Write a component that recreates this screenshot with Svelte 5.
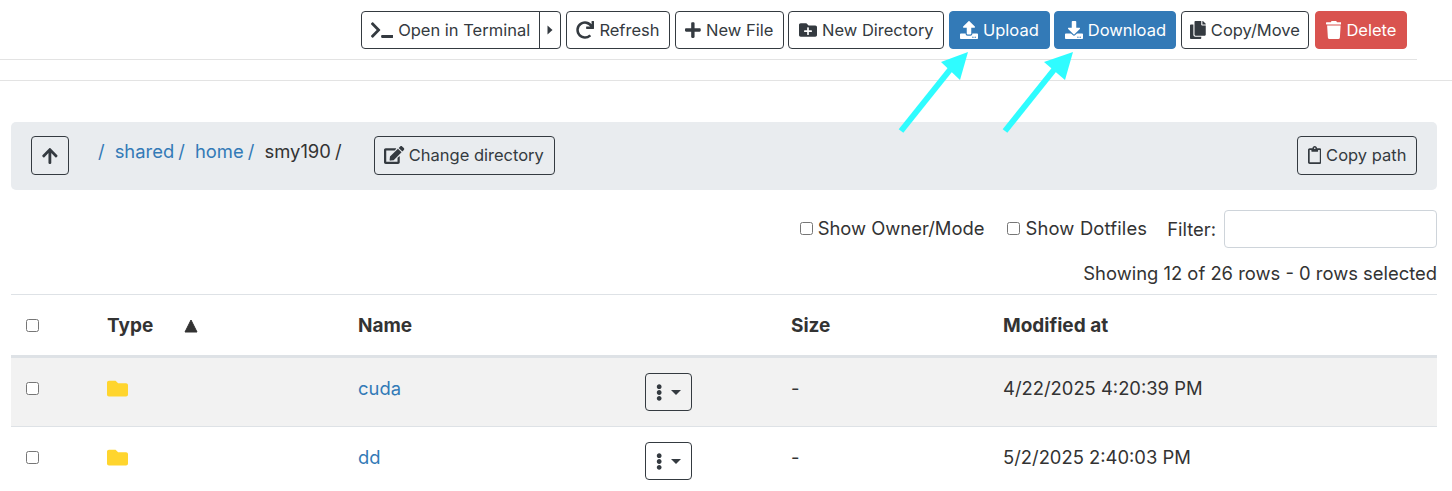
<script>
  const I = {
    terminal: [640, "M257.981 272.971L63.638 467.314c-9.373 9.373-24.569 9.373-33.941 0L7.029 444.647c-9.357-9.357-9.375-24.522-.04-33.901L161.011 256 6.99 101.255c-9.335-9.379-9.317-24.544.04-33.901l22.667-22.667c9.373-9.373 24.569-9.373 33.941 0L257.981 239.03c9.373 9.372 9.373 24.568 0 33.941zM640 456v-32c0-13.255-10.745-24-24-24H312c-13.255 0-24 10.745-24 24v32c0 13.255 10.745 24 24 24h304c13.255 0 24-10.745 24-24z"],
    redo: [512, "M500.33 0h-47.41a12 12 0 0 0-12 12.57l4 82.76A247.42 247.42 0 0 0 256 8C119.34 8 7.9 119.53 8 256.19 8.1 393.07 119.1 504 256 504a247.1 247.1 0 0 0 166.18-63.91 12 12 0 0 0 .48-17.43l-34-34a12 12 0 0 0-16.38-.55A176 176 0 1 1 402.1 157.8l-101.53-4.87a12 12 0 0 0-12.57 12v47.41a12 12 0 0 0 12 12h200.33a12 12 0 0 0 12-12V12a12 12 0 0 0-12-12z"],
    plus: [448, "M416 208H272V64c0-17.67-14.33-32-32-32h-32c-17.67 0-32 14.33-32 32v144H32c-17.67 0-32 14.33-32 32v32c0 17.67 14.33 32 32 32h144v144c0 17.67 14.33 32 32 32h32c17.67 0 32-14.33 32-32V304h144c17.67 0 32-14.33 32-32v-32c0-17.67-14.33-32-32-32z"],
    folderPlus: [512, "M464 128H272l-54.63-54.63c-6-6-14.14-9.37-22.63-9.37H48C21.49 64 0 85.49 0 112v288c0 26.51 21.49 48 48 48h416c26.51 0 48-21.49 48-48V176c0-26.51-21.49-48-48-48zm-96 168c0 8.84-7.16 16-16 16h-72v72c0 8.84-7.16 16-16 16h-16c-8.84 0-16-7.16-16-16v-72h-72c-8.84 0-16-7.16-16-16v-16c0-8.84 7.16-16 16-16h72v-72c0-8.84 7.16-16 16-16h16c8.84 0 16 7.16 16 16v72h72c8.84 0 16 7.16 16 16v16z"],
    upload: [512, "M296 384h-80c-13.3 0-24-10.7-24-24V192h-87.7c-17.8 0-26.7-21.5-14.1-34.1L242.3 5.7c7.5-7.5 19.8-7.5 27.3 0l152.2 152.2c12.6 12.6 3.7 34.1-14.1 34.1H320v168c0 13.3-10.7 24-24 24zm216-8v112c0 13.3-10.7 24-24 24H24c-13.3 0-24-10.7-24-24V376c0-13.3 10.7-24 24-24h136v8c0 30.9 25.1 56 56 56h80c30.9 0 56-25.1 56-56v-8h136c13.3 0 24 10.7 24 24zm-124 88c0-11-9-20-20-20s-20 9-20 20 9 20 20 20 20-9 20-20zm64 0c0-11-9-20-20-20s-20 9-20 20 9 20 20 20 20-9 20-20z"],
    download: [512, "M216 0h80c13.3 0 24 10.7 24 24v168h87.7c17.8 0 26.7 21.5 14.1 34.1L269.7 378.3c-7.5 7.5-19.8 7.5-27.3 0L90.1 226.1c-12.6-12.6-3.7-34.1 14.1-34.1H192V24c0-13.3 10.7-24 24-24zm296 376v112c0 13.3-10.7 24-24 24H24c-13.3 0-24-10.7-24-24V376c0-13.3 10.7-24 24-24h146.7l49 49c20.1 20.1 52.5 20.1 72.6 0l49-49H488c13.3 0 24 10.7 24 24zm-124 88c0-11-9-20-20-20s-20 9-20 20 9 20 20 20 20-9 20-20zm64 0c0-11-9-20-20-20s-20 9-20 20 9 20 20 20 20-9 20-20z"],
    copy: [448, "M320 448v40c0 13.255-10.745 24-24 24H24c-13.255 0-24-10.745-24-24V120c0-13.255 10.745-24 24-24h72v296c0 30.879 25.121 56 56 56h168zm0-344V0H152c-13.255 0-24 10.745-24 24v368c0 13.255 10.745 24 24 24h272c13.255 0 24-10.745 24-24V128H344c-13.2 0-24-10.8-24-24zm120.971-31.029L375.029 7.029A24 24 0 0 0 358.059 0H352v96h96v-6.059a24 24 0 0 0-7.029-16.97z"],
    trash: [448, "M432 32H312l-9.4-18.7A24 24 0 0 0 281.1 0H166.8a23.72 23.72 0 0 0-21.4 13.3L136 32H16A16 16 0 0 0 0 48v32a16 16 0 0 0 16 16h416a16 16 0 0 0 16-16V48a16 16 0 0 0-16-16zM53.2 467a48 48 0 0 0 47.9 45h245.8a48 48 0 0 0 47.9-45L416 128H32z"],
    up: [448, "M34.9 289.5l-22.2-22.2c-9.4-9.4-9.4-24.6 0-33.9L207 39c9.4-9.4 24.6-9.4 33.9 0l194.3 194.3c9.4 9.4 9.4 24.6 0 33.9L413 289.4c-9.5 9.5-25 9.3-34.3-.4L264 168.6V456c0 13.3-10.7 24-24 24h-32c-13.3 0-24-10.7-24-24V168.6L69.2 289.1c-9.3 9.8-24.8 10-34.3.4z"],
    edit: [576, "M402.6 83.2l90.2 90.2c3.8 3.8 3.8 10 0 13.8L274.4 405.6l-92.8 10.3c-12.4 1.4-22.9-9.1-21.5-21.5l10.3-92.8L388.8 83.2c3.8-3.8 10-3.8 13.8 0zm162-22.9l-48.8-48.8c-15.2-15.2-39.9-15.2-55.2 0l-35.4 35.4c-3.8 3.8-3.8 10 0 13.8l90.2 90.2c3.8 3.8 10 3.8 13.8 0l35.4-35.4c15.2-15.3 15.2-40 0-55.2zM384 346.2V448H64V128h229.8c3.2 0 6.2-1.3 8.5-3.5l40-40c7.6-7.6 2.2-20.5-8.5-20.5H48C21.5 64 0 85.5 0 112v352c0 26.5 21.5 48 48 48h352c26.5 0 48-21.5 48-48V306.2c0-10.7-12.9-16-20.5-8.5l-40 40c-2.2 2.3-3.5 5.3-3.5 8.5z"],
    clip: [384, "M336 64h-80c0-35.3-28.7-64-64-64s-64 28.7-64 64H48C21.5 64 0 85.5 0 112v352c0 26.5 21.5 48 48 48h288c26.5 0 48-21.5 48-48V112c0-26.5-21.5-48-48-48zM192 40c13.3 0 24 10.7 24 24s-10.7 24-24 24-24-10.7-24-24 10.7-24 24-24zm144 418c0 3.3-2.7 6-6 6H54c-3.3 0-6-2.7-6-6V118c0-3.3 2.7-6 6-6h42v36c0 6.6 5.4 12 12 12h168c6.6 0 12-5.4 12-12v-36h42c3.3 0 6 2.7 6 6z"],
    folder: [512, "M464 128H272l-64-64H48C21.49 64 0 85.49 0 112v288c0 26.51 21.49 48 48 48h416c26.51 0 48-21.49 48-48V176c0-26.51-21.49-48-48-48z"],
    dots: [192, "M96 184c39.8 0 72 32.2 72 72s-32.2 72-72 72-72-32.2-72-72 32.2-72 72-72zM24 80c0 39.8 32.2 72 72 72s72-32.2 72-72S135.8 8 96 8 24 40.2 24 80zm0 352c0 39.8 32.2 72 72 72s72-32.2 72-72-32.2-72-72-72-72 32.2-72 72z"]
  };
  const tools = [
    { key: 'redo', label: 'Refresh', w: 'w105' },
    { key: 'plus', label: 'New File', w: 'w109' },
    { key: 'folderPlus', label: 'New Directory', w: 'w156' },
    { key: 'upload', label: 'Upload', w: 'w101', kind: 'primary' },
    { key: 'download', label: 'Download', w: 'w122', kind: 'primary' },
    { key: 'copy', label: 'Copy/Move', w: 'w128' },
    { key: 'trash', label: 'Delete', w: 'w92', kind: 'danger' }
  ];
  const rows = [
    { name: 'cuda', date: '4/22/2025 4:20:39 PM', alt: true },
    { name: 'dd', date: '5/2/2025 2:40:03 PM', alt: false }
  ];
</script>

{#snippet icon(key)}
  <svg class="ico" viewBox="0 0 {I[key][0]} 512" aria-hidden="true"><path d={I[key][1]} /></svg>
{/snippet}

<div class="page">
  <div class="toolbar">
    <div class="split">
      <button class="btn term">{@render icon('terminal')}<span>Open in Terminal</span></button>
      <button class="btn caret" aria-label="More"><svg viewBox="0 0 6 10" class="tri"><path d="M0.5 0.5 L5.5 5 L0.5 9.5 Z" /></svg></button>
    </div>
    {#each tools as t}
      <button class="btn {t.w} {t.kind ?? ''}">{@render icon(t.key)}<span>{t.label}</span></button>
    {/each}
  </div>
  <div class="rule short"></div>
  <div class="rule long"></div>

  <div class="crumbbar">
    <button class="btn upbtn" aria-label="Up">{@render icon('up')}</button>
    <div class="crumbs">
      <a href="#root">/</a>
      <a href="#shared">shared /</a>
      <a href="#home">home /</a>
      <span>smy190 /</span>
    </div>
    <button class="btn chdir">{@render icon('edit')}<span>Change directory</span></button>
    <button class="btn cpath">{@render icon('clip')}<span>Copy path</span></button>
  </div>

  <div class="filters">
    <label class="chk first"><input type="checkbox" />Show Owner/Mode</label>
    <label class="chk second"><input type="checkbox" />Show Dotfiles</label>
    <label class="flt" for="flt">Filter:</label>
    <input id="flt" class="fltin" type="text" />
  </div>
  <div class="count">Showing 12 of 26 rows - 0 rows selected</div>

  <div class="table">
    <div class="row thead">
      <div class="c"><input type="checkbox" /></div>
      <div class="c type">Type <svg class="sort" viewBox="0 0 14 14"><path d="M7 1 L13 13 H1 Z" stroke-linejoin="round" /></svg></div>
      <div class="c">Name</div>
      <div class="c"></div>
      <div class="c">Size</div>
      <div class="c">Modified at</div>
    </div>
    {#each rows as r}
      <div class="row body" class:alt={r.alt}>
        <div class="c box"><input type="checkbox" /></div>
        <div class="c folder up">{@render icon('folder')}</div>
        <div class="c up"><a href="#{r.name}">{r.name}</a></div>
        <div class="c">
          <button class="btn kebab" aria-label="Actions">{@render icon('dots')}<svg class="dd" viewBox="0 0 10 5"><path d="M0 0 H10 L5 5 Z" /></svg></button>
        </div>
        <div class="c up">-</div>
        <div class="c up">{r.date}</div>
      </div>
    {/each}
  </div>

  <svg class="arrows" viewBox="0 0 1452 491" aria-hidden="true">
    <path class="shaft" d="M901 131 L953 66" />
    <path class="tip" d="M968 52 L960 80 L941 62 Z" />
    <path class="shaft" d="M1005 131 L1057 66" />
    <path class="tip" d="M1073 52 L1065 80 L1044 62 Z" />
  </svg>
</div>

<style>
  :global(body) { margin: 0; background: #fff; }
  .page {
    position: relative;
    height: 491px;
    overflow: hidden;
    font-family: Inter, "Liberation Sans", sans-serif;
    font-size: 18.4px;
    line-height: 26px;
    color: #333;
  }
  a { color: #337ab7; text-decoration: none; }
  .toolbar {
    display: flex;
    justify-content: flex-end;
    gap: 4.57px;
    padding: 11px 45px 0 0;
  }
  .btn {
    display: inline-flex;
    align-items: center;
    justify-content: center;
    gap: 5px;
    height: 38px;
    padding: 0;
    box-sizing: border-box;
    font: inherit;
    font-size: 16.5px;
    color: #343a40;
    background: transparent;
    border: 1px solid #343a40;
    border-radius: 4px;
    white-space: nowrap;
  }
  .ico { height: 18px; width: auto; fill: currentColor; flex: none; }
  .split { display: flex; width: 200.5px; }
  .term { flex: 1; border-radius: 4px 0 0 4px; }
  .caret { width: 22px; margin-left: -1px; border-radius: 0 4px 4px 0; flex: none; }
  .tri { width: 6px; height: 10px; fill: #343a40; }
  .w105 { width: 104.5px; }
  .w109 { width: 109px; }
  .w156 { width: 156px; }
  .w101 { width: 101px; }
  .w122 { width: 122px; }
  .w128 { width: 128px; }
  .w92 { width: 92px; }
  .primary { background: #337ab7; border-color: #337ab7; color: #fff; }
  .danger { background: #d9534f; border-color: #d9534f; color: #fff; margin-left: 1.43px; }
  .rule { height: 1px; background: #e3e3e3; }
  .short { margin: 10px 35px 0 0; }
  .long { margin-top: 20px; }
  .crumbbar {
    display: flex;
    align-items: flex-start;
    height: 68px;
    box-sizing: border-box;
    margin: 41px 15px 0 11px;
    padding: 14px 20px;
    background: #e9ecef;
    border-radius: 5px;
  }
  .upbtn { width: 38px; height: 39px; }
  .crumbs { display: flex; gap: 10px; margin: 2px 0 0 29px; word-spacing: -1px; }
  .chdir { width: 181px; height: 39px; margin-left: 32px; gap: 4px; padding-bottom: 1px; }
  .cpath { width: 120px; height: 39px; margin-left: auto; padding-bottom: 1px; }
  .filters {
    display: flex;
    justify-content: flex-end;
    align-items: center;
    margin: 20px 15px 0 0;
    height: 38px;
  }
  .chk { display: flex; align-items: center; gap: 5px; position: relative; top: -1px; }
  .chk input, .c input { width: 13px; height: 13px; margin: 0; }
  .second { margin-left: 23px; letter-spacing: 0.16px; }
  .flt { margin-left: 20px; }
  .fltin {
    width: 213px;
    height: 38px;
    box-sizing: border-box;
    margin-left: 8px;
    border: 1px solid #ced4da;
    border-radius: 4px;
    background: #fff;
  }
  .count { margin: 12px 15px 0 0; text-align: right; height: 34px; }
  .table { margin: 0 15px 0 11px; border-top: 1px solid #dee2e6; }
  .row {
    display: grid;
    grid-template-columns: 96px 251px 287px 146px 212px 1fr;
    align-items: center;
  }
  .c:first-child { padding-left: 15px; display: flex; }
  .thead { font-weight: 700; font-size: 19px; border-bottom: 3px solid #dee2e6; padding-top: 1px; box-sizing: content-box; height: 59px; }
  .type { display: flex; align-items: center; }
  .sort { width: 14px; height: 14px; fill: #333; stroke: #333; stroke-width: 1; margin-left: 31px; }
  .body { height: 69px; border-bottom: 1px solid #dee2e6; box-sizing: border-box; }
  .box { padding-bottom: 7px; }
  .up { padding-bottom: 8px; }
  .alt { background: #f2f2f2; }
  .folder { display: flex; }
  .folder .ico { height: 21px; fill: #ffd52e; }
  .kebab { width: 47px; height: 38px; gap: 8px; }
  .kebab .ico { height: 17px; }
  .dd { width: 10px; height: 5px; fill: #343a40; }
  .arrows { position: absolute; inset: 0; width: 1452px; height: 491px; pointer-events: none; }
  .shaft { stroke: #2ffcff; stroke-width: 6; fill: none; }
  .tip { fill: #2ffcff; }
</style>
